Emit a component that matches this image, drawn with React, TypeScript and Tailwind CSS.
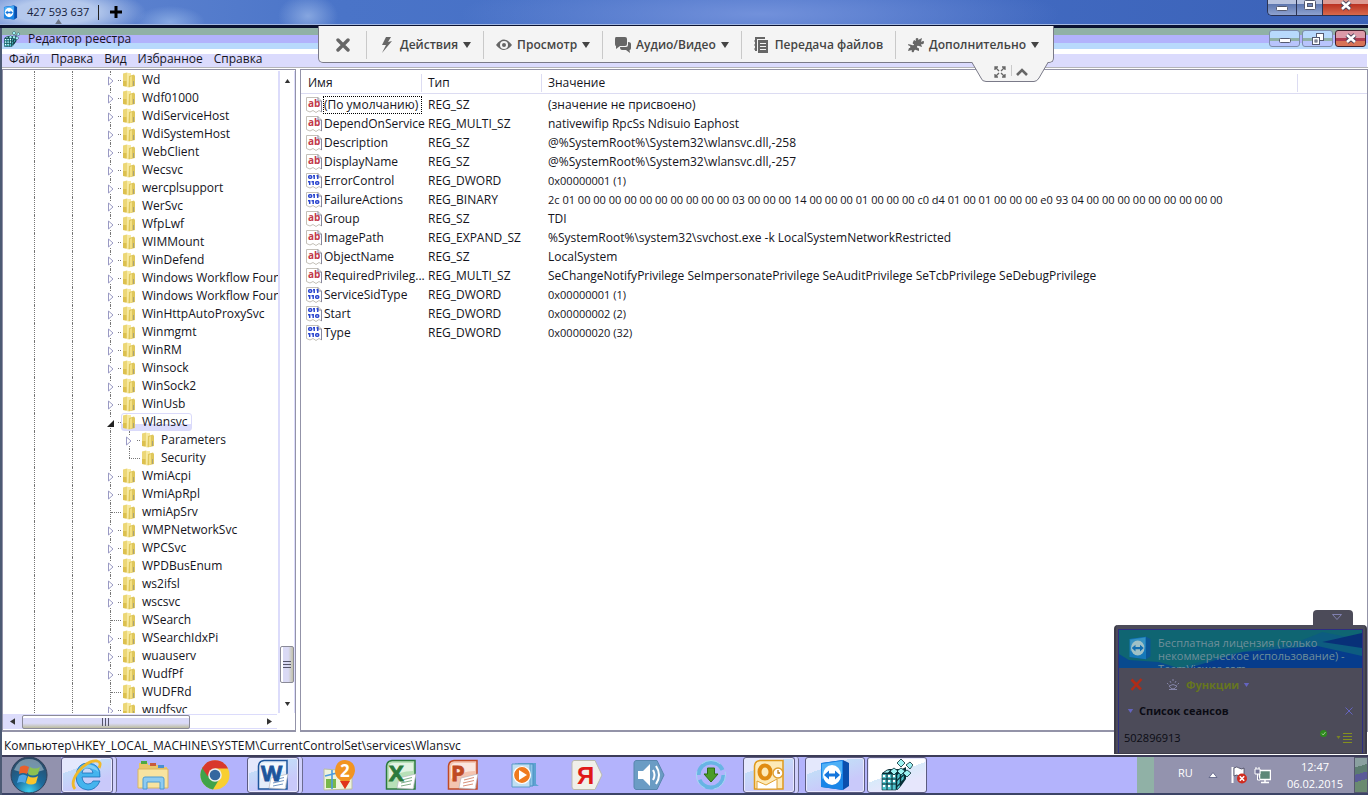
import type { ReactNode } from 'react';
import clsx from 'clsx';

type TreeNode = {
    name: string;
    leaf?: boolean;
    open?: boolean;
    child?: boolean;
    lastChild?: boolean;
};

const nodes: TreeNode[] = [
    { name: 'Wd' },
    { name: 'Wdf01000' },
    { name: 'WdiServiceHost' },
    { name: 'WdiSystemHost' },
    { name: 'WebClient' },
    { name: 'Wecsvc' },
    { name: 'wercplsupport' },
    { name: 'WerSvc' },
    { name: 'WfpLwf' },
    { name: 'WIMMount' },
    { name: 'WinDefend' },
    { name: 'Windows Workflow Foundation 3.0.0.0' },
    { name: 'Windows Workflow Foundation 4.0.0.0' },
    { name: 'WinHttpAutoProxySvc' },
    { name: 'Winmgmt' },
    { name: 'WinRM' },
    { name: 'Winsock' },
    { name: 'WinSock2' },
    { name: 'WinUsb' },
    { name: 'Wlansvc', open: true },
    { name: 'Parameters', child: true },
    { name: 'Security', child: true, leaf: true, lastChild: true },
    { name: 'WmiAcpi' },
    { name: 'WmiApRpl' },
    { name: 'wmiApSrv', leaf: true },
    { name: 'WMPNetworkSvc' },
    { name: 'WPCSvc' },
    { name: 'WPDBusEnum' },
    { name: 'ws2ifsl' },
    { name: 'wscsvc' },
    { name: 'WSearch', leaf: true },
    { name: 'WSearchIdxPi' },
    { name: 'wuauserv' },
    { name: 'WudfPf' },
    { name: 'WUDFRd', leaf: true },
    { name: 'wudfsvc' },
];

const values = [
    ['(По умолчанию)', 'REG_SZ', '(значение не присвоено)'],
    ['DependOnService', 'REG_MULTI_SZ', 'nativewifip RpcSs Ndisuio Eaphost'],
    ['Description', 'REG_SZ', '@%SystemRoot%\\System32\\wlansvc.dll,-258'],
    ['DisplayName', 'REG_SZ', '@%SystemRoot%\\System32\\wlansvc.dll,-257'],
    ['ErrorControl', 'REG_DWORD', '0x00000001 (1)'],
    [
        'FailureActions',
        'REG_BINARY',
        '2c 01 00 00 00 00 00 00 00 00 00 00 03 00 00 00 14 00 00 00 01 00 00 00 c0 d4 01 00 01 00 00 00 e0 93 04 00 00 00 00 00 00 00 00 00',
    ],
    ['Group', 'REG_SZ', 'TDI'],
    [
        'ImagePath',
        'REG_EXPAND_SZ',
        '%SystemRoot%\\system32\\svchost.exe -k LocalSystemNetworkRestricted',
    ],
    ['ObjectName', 'REG_SZ', 'LocalSystem'],
    [
        'RequiredPrivileg...',
        'REG_MULTI_SZ',
        'SeChangeNotifyPrivilege SeImpersonatePrivilege SeAuditPrivilege SeTcbPrivilege SeDebugPrivilege',
    ],
    ['ServiceSidType', 'REG_DWORD', '0x00000001 (1)'],
    ['Start', 'REG_DWORD', '0x00000002 (2)'],
    ['Type', 'REG_DWORD', '0x00000020 (32)'],
];

const isBinary = (type: string) => type === 'REG_DWORD' || type === 'REG_BINARY';

const TeamViewerLogo = ({ size }: { size: number }) => (
    <svg width={size} height={size} viewBox="0 0 32 32" className="shrink-0">
        <path d="M3 4 L24 1 L30 4 V27 L24 31 L3 28 Z" fill="#0a4fae" />
        <path d="M2 4 L24 1 V31 L2 28 Z" fill="#1a86e8" />
        <path d="M3 5 L23 2 V15 Q12 14 3 20 Z" fill="#4fb0f6" />
        <ellipse cx="13" cy="16" rx="9" ry="10" fill="#fff" />
        <path
            d="M5 16 L10 11.5 V14.5 H16 V11.5 L21 16 L16 20.5 V17.5 H10 V20.5 Z"
            fill="#1576dc"
        />
    </svg>
);

const RegeditLogo = ({ size }: { size: number }) => (
    <svg width={size} height={size} viewBox="0 0 32 32" className="shrink-0">
        <path
            d="M1 14 L8 10 H21 L25 8 V20 L20 27 L15 31 H1 Z"
            fill="#062f38"
        />
        <g fill="#52c6cf" stroke="#0a2c34" strokeWidth=".6">
            <path d="M1 15h5v5H1zM6 15h5v5H6zM11 15h4v5h-4zM1 20h5v5H1zM6 20h5v5H6zM11 20h4v5h-4zM1 25h5v6H1zM6 25h5v6H6zM11 25h4v6h-4z" />
            <path d="M16 16l3-3v5l-3 3zM16 22l3-3v5l-3 3zM20 13l3-3v5l-3 3zM20 19l3-3v4l-3 3zM16 28l3-3v3l-3 3z" />
        </g>
        <g fill="#9df1f2" stroke="#0a2c34" strokeWidth=".8">
            <path d="M2 14l4-3h4l-3 3zM9 12l4-3 4 3-4 4zM16 12l4-3 4 3-4 4z" />
            <path d="M16 4l4-4 4 4-4 4zM25 6l4-3 3 3-3 4zM22 14l4-3 4 3-4 4z" />
        </g>
        <g fill="#fff">
            <path d="M2 16h2v2H2zM7 16h2v2H7zM12 16h2v2h-2zM2 21h2v2H2zM7 21h2v2H7zM12 21h2v2h-2zM2 26h2v2H2zM7 26h2v2H7z" />
        </g>
    </svg>
);

const Folder = () => (
    <svg width="14" height="16" viewBox="0 0 14 16" className="shrink-0">
        <path d="M1 1.500 L5 .5 L7 2 V15 L1 14 Z" fill="#ecd777" />
        <path d="M5 1 H9 V14 L5 15.500 Z" fill="#f7eaa2" />
        <path d="M7 4 L12 2.500 L13 4 V14 L6.500 15.500 Z" fill="#dfc75c" />
        <path d="M8 5 L10 4 V14 L8 15 Z" fill="#f3e085" />
        <path d="M1 9 H4.500 V14.500 L1 14 Z" fill="#dcc04f" />
        <path d="M11.500 9 V14" stroke="#a9a37a" />
    </svg>
);

const ValueIcon = ({ binary }: { binary: boolean }) => (
    <svg width="16" height="16" viewBox="0 0 16 16" className="shrink-0">
        <path d="M.5 .5 H12 L15.500 4 V15 L13 13.500 L10 15.500 L7 13.500 L4 15 L.5 13.500 Z" fill="#fff" stroke="#c4c0b8" />
        <path d="M12 .5 V4 H15.500 M15.500 4 V15" fill="none" stroke="#85859c" />
        {binary ? (
            <g fill="none" stroke="#2b46cf" strokeWidth="1.500">
                <rect x="2.700" y="2.700" width="3" height="2.600" rx="1" />
                <path d="M7 2.700 H9 M8.200 2 V6 M10.500 2.700 H12 M11.700 2 V6" />
                <path d="M2 8.700 H3.500 M3.700 8 V12 M5.500 8.700 H7 M7.200 8 V12" />
                <rect x="9.700" y="8.700" width="3" height="2.600" rx="1" />
            </g>
        ) : (
            <text x="2" y="10" fontSize="10" fontWeight="700" fill="#c2394a" fontFamily="Open Sans, sans-serif">
                ab
            </text>
        )}
    </svg>
);

const Expander = ({ open }: { open?: boolean }) => (
    <svg width="8" height="10" viewBox="0 0 8 10" className="absolute -left-1 top-[5px] bg-white">
        {open ? (
            <path d="M7 2 V9 H0 Z" fill="#222" />
        ) : (
            <path d="M1.500 1 L6 5 L1.500 9 Z" fill="#fff" stroke="#9a9ac4" />
        )}
    </svg>
);

const TreeRow = ({ name, leaf, open, child, lastChild }: TreeNode) => (
    <li className="flex h-[18px] shrink-0">
        <span className="w-[32px] shrink-0 border-r border-dotted border-[#777]" />
        <span className="w-[38px] shrink-0 border-r border-dotted border-[#777]" />
        <span className="w-[37px] shrink-0" />
        <span
            className={clsx('relative shrink-0 border-l border-dotted border-[#777]', child ? 'w-[19px]' : 'w-[11px]')}
        >
            {!child && !leaf && <Expander open={open} />}
            {!child && (
                <span
                    className={clsx(
                        'absolute right-0 top-[9px] border-t border-dotted border-[#777]',
                        leaf ? 'w-full' : 'w-[3px]',
                    )}
                />
            )}
        </span>
        {child && (
            <span className="relative w-[11px] shrink-0">
                <span
                    className={clsx(
                        'absolute left-0 top-0 border-l border-dotted border-[#777]',
                        lastChild ? 'h-[9px]' : 'h-full',
                    )}
                />
                {!leaf && <Expander />}
                <span
                    className={clsx(
                        'absolute right-0 top-[9px] border-t border-dotted border-[#777]',
                        leaf ? 'w-full' : 'w-[3px]',
                    )}
                />
            </span>
        )}
        <button
            type="button"
            className={clsx(
                'flex items-center gap-[6px] whitespace-nowrap rounded-[3px] border pr-[3px]',
                open
                    ? 'border-[#dadafa] bg-[linear-gradient(#fff_60%,#dcdcfc_60%)]'
                    : 'border-transparent',
            )}
        >
            <Folder />
            {name}
        </button>
    </li>
);

const Caret = ({ className }: { className?: string }) => (
    <svg width="8" height="6" viewBox="0 0 8 6" className={clsx('shrink-0', className)}>
        <path d="M0 0 H8 L4 6 Z" fill="currentColor" />
    </svg>
);

const Grip = ({ vertical }: { vertical?: boolean }) => (
    <svg width="8" height="8" viewBox="0 0 8 8">
        <path
            d={vertical ? 'M0 .5H8M0 3.500H8M0 6.500H8' : 'M.5 0V8M3.500 0V8M6.500 0V8'}
            stroke="#55556a"
        />
    </svg>
);

const TreePane = () => (
    <nav className="flex w-[294px] shrink-0 flex-col border border-b-2 border-[#9393a8] bg-white pt-px">
        <div className="flex min-h-0 flex-1">
            <ul className="flex min-w-0 flex-1 flex-col overflow-hidden">
                {nodes.map((node) => (
                    <TreeRow key={node.name} {...node} />
                ))}
            </ul>
            <div className="flex w-4 flex-col items-center border-l-2 border-[#dcdcfb]">
                <button type="button" aria-label="Вверх" className="flex h-5 items-center">
                    <Caret className="h-[4px] w-[7px] rotate-180 text-[#333]" />
                </button>
                <div className="flex-1" />
                <div className="flex h-[37px] w-[14px] items-center justify-center rounded-[2px] border border-[#8a8a98] bg-[linear-gradient(90deg,#fff_15%,#dadaf5_20%,#dadaf5_60%,#c2c2aa)]">
                    <Grip vertical />
                </div>
                <button type="button" aria-label="Вниз" className="mb-px mt-[13px] flex h-4 items-center">
                    <Caret className="h-[4px] w-[7px] text-[#333]" />
                </button>
            </div>
            <div className="w-px bg-[#dcdcfb]" />
        </div>
        <div className="mt-px flex h-[15px] items-center bg-[#dcdcfb]">
            <button type="button" aria-label="Влево" className="flex w-[19px] justify-center">
                <Caret className="h-[5px] w-[7px] rotate-90 text-[#333]" />
            </button>
            <div className="flex h-[14px] w-[168px] items-center justify-center rounded-[2px] border border-[#8a8a98] bg-[linear-gradient(#fff_15%,#dadaf8_20%,#dadaf8_60%,#bcbca0)]">
                <Grip />
            </div>
            <div className="my-px h-[13px] flex-1 bg-white" />
            <button type="button" aria-label="Вправо" className="flex h-[13px] w-4 items-center justify-center bg-white">
                <Caret className="h-[5px] w-[7px] -rotate-90 text-[#333]" />
            </button>
            <div className="h-full w-[18px] bg-white" />
        </div>
        <div className="h-px" />
    </nav>
);

const ValuesPane = () => (
    <section className="min-w-0 flex-1 overflow-hidden border border-b-2 border-[#9393a8] bg-white">
        <table className="w-full table-fixed border-collapse text-left">
            <colgroup>
                <col className="w-[121px]" />
                <col className="w-[120px]" />
                <col />
                <col className="w-[69px]" />
            </colgroup>
            <thead>
                <tr className="h-[23px] border-b border-[#dcdcf2]">
                    {['Имя', 'Тип', 'Значение'].map((title, i) => (
                        <th key={title} className="p-0 pt-1 font-normal">
                            <span
                                className={clsx(
                                    'flex h-[18px] items-center border-r border-[#dcdcf2]',
                                    i === 0 ? 'pl-[7px]' : 'pl-[6px]',
                                )}
                            >
                                {title}
                            </span>
                        </th>
                    ))}
                    <th />
                </tr>
            </thead>
            <tbody className="before:block before:h-[2px] before:content-['']">
                {values.map(([name, type, value], i) => (
                    <tr key={name} className="h-[19px]">
                        <td className="p-0 pl-[5px]">
                            <span className="flex h-[19px] items-center gap-px whitespace-nowrap">
                                <ValueIcon binary={isBinary(type)} />
                                <span
                                    className={clsx(
                                        'border border-dotted',
                                        i === 0 ? 'w-full border-black' : 'border-transparent',
                                    )}
                                >
                                    {name}
                                </span>
                            </span>
                        </td>
                        <td className="p-0 pl-[6px]">{type}</td>
                        <td
                            colSpan={2}
                            className={clsx('whitespace-nowrap p-0 pl-[6px]', isBinary(type) && 'text-[11px]')}
                        >
                            {value}
                        </td>
                    </tr>
                ))}
            </tbody>
        </table>
    </section>
);

const ToolbarItem = ({ icon, label, menu = true }: { icon: ReactNode; label: string; menu?: boolean }) => (
    <button type="button" className="flex h-7 shrink-0 items-center gap-[5px] border-l border-[#c9c9c9] px-3">
        {icon}
        {label}
        {menu && <Caret />}
    </button>
);

const SessionToolbar = () => (
    <div className="absolute left-[318px] top-[26px] z-10 text-[#444]">
        <div className="flex h-[37px] w-[736px] items-center whitespace-nowrap rounded-b-[5px] border border-t-0 border-[#7a7a88] bg-[#f4f4f4] pl-px pt-px text-[12px] font-semibold">
            <button type="button" aria-label="Закрыть" className="flex w-[46px] shrink-0 justify-center">
                <svg width="14" height="14" viewBox="0 0 14 14">
                    <path d="M2 2 L12 12 M12 2 L2 12" stroke="#666" strokeWidth="3.400" strokeLinecap="round" />
                </svg>
            </button>
            <ToolbarItem
                label="Действия"
                icon={
                    <svg width="16" height="16" viewBox="0 0 16 16">
                        <path d="M7 0 H12 L9 5 L13 4 L3 16 L7 8 H3 Z" fill="#666" />
                    </svg>
                }
            />
            <ToolbarItem
                label="Просмотр"
                icon={
                    <svg width="16" height="16" viewBox="0 0 16 16">
                        <path d="M0 8 Q8 -3 16 8 Q8 18 0 8 Z" fill="#666" />
                        <circle cx="8" cy="8" r="4" fill="#f4f4f4" />
                        <circle cx="8" cy="8" r="2" fill="#666" />
                    </svg>
                }
            />
            <ToolbarItem
                label="Аудио/Видео"
                icon={
                    <svg width="16" height="16" viewBox="0 0 16 16">
                        <path d="M1 0 H10 Q12 0 12 2 V7 Q12 9 10 9 H5 L1 12 V9 Q0 9 0 7 V2 Q0 0 1 0 Z" fill="#666" />
                        <path d="M13 5 Q16 5 16 7 V11 Q16 13 14.500 13 L15 16 L11 13 H7 Q5 13 5 10 H11 Q13 10 13 8 Z" fill="#666" />
                    </svg>
                }
            />
            <ToolbarItem
                label="Передача файлов"
                menu={false}
                icon={
                    <svg width="16" height="16" viewBox="0 0 16 16">
                        <path d="M11 1 H2 V14" fill="none" stroke="#666" strokeWidth="2" />
                        <path d="M0 4 H3 M0 8 H3 M0 12 H3" stroke="#666" />
                        <path d="M4 3 H14 V16 H4 Z" fill="#666" />
                        <path d="M6 6.500 H12 M6 9.500 H12 M6 12.500 H12" stroke="#f4f4f4" />
                    </svg>
                }
            />
            <ToolbarItem
                label="Дополнительно"
                icon={
                    <svg width="16" height="16" viewBox="0 0 16 16">
                        <path
                            d="M6 3 L8 4 Q7 1 9 1 Q11 1 10 3 L14 1 L13 5 Q16 3 16 5 Q16 8 13 7 L14 10 L11 9 Q9 8 9 10 Q10 12 11 11 L11 14 L8 13 Q7 12 6 14 Q6 16 4 15 Q3 14 4 13 L0 14 L1 11 Q3 11 2 9 Q0 9 0 7 L4 8 Q6 9 6 7 Q4 7 5 5 Z"
                            fill="#666"
                        />
                    </svg>
                }
            />
        </div>
        <div className="absolute left-[654px] top-9">
            <svg width="78" height="21" viewBox="0 0 78 21">
                <path d="M0 0 L9 16 Q10 19.500 14 19.500 H62 Q65 19.500 67 16 L76 0 Z" fill="#f4f4f4" />
                <path d="M0 .5 L9 16 Q10 19.500 14 19.500 H62 Q65 19.500 67 16 L76 .5" fill="none" stroke="#7a7a88" />
                <path d="M39.500 3 V14" stroke="#c9c9c9" />
                <path
                    d="M23 8 V5 H26 M23 5 L27 9 M33 8 V5 H30 M33 5 L29 9 M23 12 V15 H26 M23 15 L27 11 M33 12 V15 H30 M33 15 L29 11"
                    fill="none"
                    stroke="#666"
                    strokeWidth="1.300"
                />
                <path d="M45 13 L50 8 L55 13" fill="none" stroke="#666" strokeWidth="2.600" />
            </svg>
        </div>
    </div>
);

const MinGlyph = () => (
    <svg width="12" height="6" viewBox="0 0 12 6">
        <rect x=".5" y="1.500" width="11" height="4" rx="1" fill="#fff" stroke="#555a70" />
    </svg>
);

const CloseGlyph = () => (
    <svg width="12" height="11" viewBox="0 0 12 11">
        <path d="M2 2 L10 9 M10 2 L2 9" stroke="#4a4058" strokeWidth="4.400" />
        <path d="M2 2 L10 9 M10 2 L2 9" stroke="#fff" strokeWidth="2.600" />
    </svg>
);

const ViewerBar = () => (
    <header className="h-7 shrink-0 border-b-[3px] border-[#0b1230]">
        <div className="flex h-[25px] items-start justify-between border-b border-[#a3b8e2] bg-[radial-gradient(90px_26px_at_56px_12px,#b4c8ec_45%,transparent),radial-gradient(35px_16px_at_170px_22px,#86a8e2,transparent),radial-gradient(30px_22px_at_308px_16px,#86a6e0,transparent),radial-gradient(300px_40px_at_760px_14px,#7291db,transparent),linear-gradient(90deg,#6488d2,#4a74c8_25%,#446dc4_60%,#3b62b8)]">
            <div className="flex h-6 items-center text-[11px] text-[#15203a]">
                <span className="flex w-[27px] pl-[3px]">
                    <TeamViewerLogo size={15} />
                </span>
                <span className="relative w-[71px]">
                    427 593 637
                    <Caret className="absolute -bottom-1 left-[26px] h-[5px] w-[11px] rotate-180 text-[#6c7484]" />
                </span>
                <span className="h-[15px] w-px bg-[#222]" />
                <button type="button" aria-label="Новое подключение" className="ml-[11px]">
                    <svg width="12" height="12" viewBox="0 0 12 12">
                        <path d="M6 0 V12 M0 6 H12" stroke="#000" strokeWidth="3" />
                    </svg>
                </button>
            </div>
            <div className="flex h-4 overflow-hidden rounded-bl-[5px] border border-r-0 border-t-0 border-[#2a3354]">
                <button
                    type="button"
                    aria-label="Свернуть"
                    className="flex w-7 items-end justify-center bg-[linear-gradient(#b7c2de_30%,#5f78b0_30%,#8fa3d0)] pb-1"
                >
                    <MinGlyph />
                </button>
                <button
                    type="button"
                    aria-label="Развернуть"
                    className="flex w-[27px] justify-center border-x border-[#2a3354] bg-[linear-gradient(#b7c2de_30%,#5f78b0_30%,#8fa3d0)]"
                >
                    <svg width="12" height="11" viewBox="0 0 12 11">
                        <rect x=".5" y=".5" width="11" height="9" rx="1" fill="#fff" stroke="#555a70" />
                        <rect x="3.500" y="3.500" width="5" height="3" fill="#7187b8" stroke="#555a70" />
                    </svg>
                </button>
                <button
                    type="button"
                    aria-label="Закрыть"
                    className="flex w-[45px] justify-center bg-[linear-gradient(#dd9a92_30%,#bb3322_30%,#d86a4c)]"
                >
                    <CloseGlyph />
                </button>
            </div>
        </div>
    </header>
);

const TitleBar = () => (
    <div className="flex h-[21px] shrink-0 items-center justify-between bg-[linear-gradient(#90b1a6_7px,#b2b2fc_7px,#b2b2fc_15px,#b8d9fc_15px)] pl-[2px]">
        <div className="flex items-center gap-2">
            <RegeditLogo size={16} />
            <h1>Редактор реестра</h1>
        </div>
        <div className="flex gap-[2px] pr-[2px]">
            <button
                type="button"
                aria-label="Свернуть"
                className="flex h-[17px] w-[31px] items-end justify-center rounded-[3px] border border-[#7d8cab] bg-[linear-gradient(#b8d9fc_45%,#90b1a6_45%,#90b1a6_68%,#b8c4fc_68%)] pb-[3px]"
            >
                <MinGlyph />
            </button>
            <button
                type="button"
                aria-label="Восстановить"
                className="flex h-[17px] w-[31px] items-center justify-center rounded-[3px] border border-[#7d8cab] bg-[linear-gradient(#b8d9fc_45%,#90b1a6_45%,#90b1a6_68%,#b8c4fc_68%)]"
            >
                <svg width="12" height="12" viewBox="0 0 12 12">
                    <g fill="#fff" stroke="#555a70">
                        <rect x="4.500" y=".5" width="7" height="7" />
                        <rect x=".5" y="4.500" width="7" height="7" />
                        <rect x="3" y="7" width="2" height="2" />
                    </g>
                </svg>
            </button>
            <button
                type="button"
                aria-label="Закрыть"
                className="flex h-[17px] w-[31px] items-center justify-center rounded-[3px] border border-[#42212e] bg-[linear-gradient(#dc9aa8_45%,#b03c50_45%,#b03c50_68%,#d87358_68%)]"
            >
                <CloseGlyph />
            </button>
        </div>
    </div>
);

const SessionPanel = () => (
    <aside className="absolute bottom-[41px] right-px z-10 flex w-[253px] flex-col items-end text-[11px] text-[#0b0b14]">
        <button
            type="button"
            aria-label="Свернуть панель"
            className="mr-[14px] flex h-[15px] w-10 items-center justify-center rounded-t-[4px] bg-[#4c4b59] pl-2"
        >
            <svg width="10" height="7" viewBox="0 0 10 7">
                <path d="M.5 .5 H9.500 L5 5.500 Z" fill="none" stroke="#8080b0" />
            </svg>
        </button>
        <div className="h-[129px] w-full rounded-t-[4px] border-x-2 border-b border-[#3d3c49] bg-[#4c4b59] px-[2px] pt-1">
            <div className="h-full border-x border-t border-[#2e2e80]">
                <div className="relative flex h-[38px] overflow-hidden bg-[#0d5c80] pt-[6px]">
                    <svg
                        className="absolute inset-0 h-full w-full"
                        viewBox="0 0 245 38"
                        preserveAspectRatio="none"
                    >
                        <path d="M0 0 H245 V10 L205 2 L180 12 L110 24 L60 38 L0 30 Z" fill="#0f6572" />
                        <path d="M0 24 L10 30 L40 32 L60 38 H0 Z" fill="#084a8e" />
                        <path d="M70 38 L125 22 L200 16 L245 26 V38 Z" fill="#063c8c" />
                        <path d="M205 12 L245 3 V18 Z" fill="#083078" />
                    </svg>
                    <span className="relative w-[39px] shrink-0 pl-[9px]">
                        <span className="block opacity-60">
                            <TeamViewerLogo size={24} />
                        </span>
                    </span>
                    <p className="relative leading-[13px] text-[#6f8f9a]">
                        Бесплатная лицензия (только некоммерческое использование) - TeamViewer.com
                    </p>
                </div>
                <div className="flex h-[33px] items-center pl-[11px] font-bold text-[#66761f]">
                    <svg width="13" height="13" viewBox="0 0 13 13">
                        <path d="M1.500 1.500 L11 11.500 M11.500 1 L1.500 12" stroke="#b02c18" strokeWidth="2.600" />
                    </svg>
                    <svg width="14" height="13" viewBox="0 0 14 13" className="ml-[23px] mr-[6px]">
                        <g fill="none" stroke="#8585a8">
                            <path d="M1 5 L3 7 M13 5 L11 7 M4 3 L5 5 M10 3 L9 5 M7 1 V4" strokeDasharray="2 1" />
                            <path d="M3 11.500 H11 M3 8 Q7 5 11 8 Q7 14 3 8" />
                        </g>
                    </svg>
                    Функции
                    <Caret className="ml-1 h-1 w-[7px] text-[#6464c0]" />
                </div>
                <div className="flex h-5 items-center pl-[8px] pr-[9px] font-bold">
                    <Caret className="mr-[5px] h-1 w-[7px] text-[#6464c0]" />
                    Список сеансов
                    <button type="button" aria-label="Скрыть" className="ml-auto">
                        <svg width="8" height="8" viewBox="0 0 8 8">
                            <path d="M.5 .5 L7.500 7.500 M7.500 .5 L.5 7.500" stroke="#6464c0" />
                        </svg>
                    </button>
                </div>
                <div className="flex h-[33px] items-center pl-[5px] pr-[10px]">
                    502896913
                    <svg width="9" height="9" viewBox="0 0 9 9" className="mb-2 ml-auto mr-2">
                        <circle cx="4.500" cy="4.500" r="3.500" fill="#2d8a1e" />
                        <path d="M3 4.500 L4.200 6 L6.500 3" fill="none" stroke="#9cc58f" />
                    </svg>
                    <Caret className="mr-[2px] h-[3px] w-[5px] text-[#7a8424]" />
                    <svg width="9" height="10" viewBox="0 0 9 10">
                        <path d="M0 .5 H9 M0 3.500 H9 M0 6.500 H9 M0 9.500 H9" stroke="#84901e" />
                    </svg>
                </div>
            </div>
        </div>
    </aside>
);

const OrbIcon = () => (
    <svg width="38" height="38" viewBox="0 0 38 38">
        <defs>
            <radialGradient id="orb" cx=".5" cy=".95" r=".9">
                <stop offset="0" stopColor="#3fd0ee" />
                <stop offset=".45" stopColor="#1c6a9c" />
                <stop offset="1" stopColor="#2a4a66" />
            </radialGradient>
        </defs>
        <circle cx="19" cy="19" r="18" fill="url(#orb)" stroke="#30405a" />
        <path d="M4 14 Q8 3 19 3 Q30 3 34 14 Q19 20 4 14Z" fill="#b4c8d6" opacity=".55" />
        <path d="M10 11 Q14 8 19 11 L17 18 Q13 16 9 18 Z" fill="#e8602c" />
        <path d="M20 11 Q25 14 30 11 L28 18 Q23 21 18 18 Z" fill="#8cc152" />
        <path d="M9 20 Q13 17 17 20 L15 27 Q11 25 7 27 Z" fill="#4fa6e6" />
        <path d="M18 20 Q23 23 28 20 L26 27 Q21 30 16 27 Z" fill="#fbc52d" />
    </svg>
);

const IeIcon = () => (
    <svg width="34" height="32" viewBox="0 0 34 32">
        <path
            d="M30 18 H12 Q13 25 18 25 Q22 25 23 22 H30 Q26 31 18 31 Q6 30 6 17 Q7 4 18 4 Q31 5 30 18 Z M12 14 H23 Q22 9 17 9 Q13 9 12 14 Z"
            fill="#45b4ee"
            stroke="#1c6fb8"
            strokeWidth=".8"
            fillRule="evenodd"
        />
        <path d="M8 14 Q10 6 18 5.500 Q27 6 28.500 13 Q18 5 8 14 Z" fill="#a8e0fa" opacity=".6" />
        <path d="M5 30 Q0 24 8 13 Q18 1 27 2 Q32 3 29 9" fill="none" stroke="#f0b92a" strokeWidth="2.800" />
    </svg>
);

const ExplorerIcon = () => (
    <svg width="34" height="30" viewBox="0 0 34 30">
        <path d="M3 3 H12 V5 H24 V7 H31 V27 H3 Z" fill="#e9c66a" />
        <path d="M5 1 h6 v3 h-6z" fill="#4da944" />
        <path d="M14 3 h6 v3 h-6z" fill="#c85a3c" />
        <path d="M22 5 h6 v3 h-6z" fill="#4a8fd0" />
        <path d="M2 9 H32 V28 H2 Z" fill="#f8e3a0" stroke="#d9b560" />
        <path d="M7 29 V19 Q7 17 9 17 H26 Q28 17 28 19 V29 H24 V22 H11 V29 Z" fill="#8ecbf0" stroke="#4d9bd4" />
    </svg>
);

const ChromeIcon = () => (
    <svg width="30" height="30" viewBox="0 0 30 30">
        <circle cx="15" cy="15" r="14.500" fill="#f8cf31" />
        <path d="M15 15 L2.500 7.500 A14.500 14.500 0 0 0 13 29.400 L20 18 Z" fill="#3fa34a" />
        <path d="M15 15 L7.500 16 L2.200 8 A14.500 14.500 0 0 1 28 8.500 H15 Z" fill="#d8382c" />
        <circle cx="15" cy="15" r="6.800" fill="#eee" />
        <circle cx="15" cy="15" r="5.300" fill="#35679f" />
    </svg>
);

type OfficeProps = { letter: string; color: string; tint: string };

const OfficeIcon = ({ letter, color, tint }: OfficeProps) => (
    <svg width="32" height="32" viewBox="0 0 32 32">
        <path d="M7 1.500 H30 V30 H1.500 V7 Q2 2 7 1.500 Z" fill={tint} stroke={color} strokeWidth="1.500" />
        <path d="M4 7 Q5 4 8 4 H28 V12 Q14 12 4 20 Z" fill="#fff" opacity=".6" />
        <path d="M14 19 L31 15 L28 30 L12 29 Z" fill="#fff" stroke="#b8b8c0" strokeWidth=".7" />
        <path d="M17 21 L27 18.500 M16 24 L27 21.500 M16 27 L26 25" stroke={color} opacity=".6" />
        <text
            x="4"
            y="22"
            fontSize="22"
            fontWeight="700"
            fill={color}
            stroke={color}
            strokeWidth=".8"
            fontFamily="Open Sans, sans-serif"
        >
            {letter}
        </text>
    </svg>
);

const MapIcon = () => (
    <svg width="34" height="32" viewBox="0 0 34 32">
        <path d="M2 10 L30 12 V30 L2 31 Z" fill="#eef3dc" stroke="#b9bfa0" />
        <path d="M4 20 H14 V29 H4 Z" fill="#79b84a" />
        <path d="M3 17 L15 14 M10 11 V30" stroke="#4c9be0" strokeWidth="1.600" />
        <path d="M13 12 Q14 1 23 1 Q33 2 33 12 Q32 18 28 21 L23 30 L18 21 Q13 18 13 12 Z" fill="#f29422" />
        <path d="M18 22 H28 L23 30 Z" fill="#e0341c" />
        <text x="18" y="18" fontSize="17" fontWeight="700" fill="#fff" fontFamily="Open Sans, sans-serif">
            2
        </text>
    </svg>
);

const PlayerIcon = () => (
    <svg width="30" height="28" viewBox="0 0 30 28">
        <path d="M8 2 H26 V23 L29 25 H9 Z" fill="#5ea3d2" />
        <path d="M5 3 H23 V25 H5 Z" fill="#8cc4e8" stroke="#4a8fc0" />
        <path d="M2 3 H20 V26 H2 Z" fill="#c0dff2" stroke="#5c9cc8" />
        <circle cx="12" cy="14" r="8.500" fill="#ef7a1e" stroke="#fff" strokeWidth="1.200" />
        <path d="M9 9 L17 14 L9 19 Z" fill="#fff" />
    </svg>
);

const TagIcon = ({ children, fill, stroke }: { children: ReactNode; fill: string; stroke: string }) => (
    <svg width="32" height="32" viewBox="0 0 32 32">
        <path d="M3 1.500 H24 L31 16 L24 30.500 H3 Q1 30 1 28 V4 Q1 2 3 1.500 Z" fill={fill} stroke={stroke} />
        {children}
    </svg>
);

const UpdateIcon = () => (
    <svg width="32" height="32" viewBox="0 0 32 32">
        <circle cx="16" cy="16" r="12.500" fill="none" stroke="#68b4e4" strokeWidth="4" strokeDasharray="34 5" />
        <circle cx="16" cy="16" r="14.500" fill="none" stroke="#a8d8f4" strokeDasharray="20 9" />
        <path d="M12.500 9 H19.500 V15 H23 L16 23 L9 15 H12.500 Z" fill="#4c9c28" stroke="#2c6c14" />
    </svg>
);

const OutlookIcon = () => (
    <svg width="32" height="32" viewBox="0 0 32 32">
        <path d="M7 1.500 H30 V30 H1.500 V7 Q2 2 7 1.500 Z" fill="#fdeab8" stroke="#e09a1c" strokeWidth="1.500" />
        <ellipse cx="12" cy="13" rx="5.500" ry="6.500" fill="none" stroke="#e08c12" strokeWidth="4" />
        <path d="M4 30 V22 L13 26 L24 20 V30 Z" fill="#fff" stroke="#e0a030" />
        <circle cx="25" cy="14" r="5" fill="#fff" stroke="#e0a030" strokeWidth="1.500" />
        <path d="M25 11 V14 H27" fill="none" stroke="#b87a18" strokeWidth="1.300" />
    </svg>
);

const apps: { label: string; icon: ReactNode; frame?: boolean; stacked?: boolean; active?: boolean }[] = [
    { label: 'Internet Explorer', icon: <IeIcon />, frame: true, stacked: true },
    { label: 'Проводник', icon: <ExplorerIcon /> },
    { label: 'Chrome', icon: <ChromeIcon /> },
    {
        label: 'Word',
        icon: <OfficeIcon letter="W" color="#1d559c" tint="#e4eefa" />,
        frame: true,
        stacked: true,
    },
    { label: '2ГИС', icon: <MapIcon /> },
    { label: 'Excel', icon: <OfficeIcon letter="X" color="#2c7a3c" tint="#b8e0b8" /> },
    { label: 'PowerPoint', icon: <OfficeIcon letter="P" color="#c04a24" tint="#f4c4b0" /> },
    { label: 'Проигрыватель', icon: <PlayerIcon /> },
    {
        label: 'Яндекс',
        icon: (
            <TagIcon fill="#f0efe9" stroke="#b9b9ae">
                <text x="6" y="25" fontSize="24" fontWeight="700" fill="#e01818" fontFamily="Liberation Sans, sans-serif">
                    Я
                </text>
            </TagIcon>
        ),
    },
    {
        label: 'Громкость',
        icon: (
            <TagIcon fill="#6b9cc4" stroke="#5885ae">
                <path d="M5 12 H10 L17 5 V27 L10 20 H5 Z" fill="#fff" />
                <path d="M20 11 Q23 16 20 21 M23 7 Q29 16 23 25" fill="none" stroke="#fff" strokeWidth="2" />
            </TagIcon>
        ),
    },
    { label: 'Обновление', icon: <UpdateIcon /> },
    { label: 'Outlook', icon: <OutlookIcon />, frame: true, stacked: true },
    { label: 'TeamViewer', icon: <TeamViewerLogo size={32} />, frame: true },
    { label: 'Редактор реестра', icon: <RegeditLogo size={32} />, frame: true, active: true },
];

const Taskbar = () => (
    <footer className="flex h-10 shrink-0 border-y-2 border-t-[#3c3c58] border-b-[#3c4466] bg-[#b3b3fc]">
        <button
            type="button"
            aria-label="Пуск"
            className="flex w-[59px] shrink-0 items-center justify-center bg-[#9292ae] pr-[6px]"
        >
            <OrbIcon />
        </button>
        {apps.map(({ label, icon, frame, stacked, active }) => (
            <div key={label} className="flex w-[62px] shrink-0">
                <button
                    type="button"
                    aria-label={label}
                    className={clsx(
                        'flex items-center justify-center border',
                        stacked ? 'w-[52px]' : 'w-[60px]',
                        frame
                            ? 'rounded-[3px] border-[#5c5c80] shadow-[inset_0_0_0_1px_#e8e8ff]'
                            : 'border-transparent',
                        frame && !active && 'bg-[linear-gradient(160deg,#e4e8fc_30%,#c3dcf8_30%,#c9c9fa_70%)]',
                        active && 'bg-[linear-gradient(160deg,#fff_45%,#d8eafa_45%,#e6e6fc_70%)]',
                    )}
                >
                    {icon}
                </button>
                {stacked && <span className="w-1 rounded-r-[3px] border-r border-[#6c6c90] bg-[#d0d0fc]" />}
            </div>
        ))}
        <div className="ml-auto flex items-center border-l-[17px] border-[#90b1a6] bg-[#9393ae] pl-6 pr-2 text-white">
            <span className="w-[30px] pb-1 text-[11px]">RU</span>
            <svg width="10" height="6" viewBox="0 0 10 6" className="shrink-0">
                <path d="M5 .5 L9 5.500 H1 Z" fill="#fff" stroke="#555a80" strokeWidth=".8" />
            </svg>
            <svg width="18" height="18" viewBox="0 0 18 18" className="ml-3 shrink-0">
                <path d="M2.500 1 V17" stroke="#fff" strokeWidth="2" />
                <path d="M4 2 Q7 0 9 2 Q12 4 14 2 V10 Q11 12 9 10 Q7 8 4 10 Z" fill="#fff" stroke="#44445c" strokeWidth=".8" />
                <circle cx="12" cy="12.500" r="5" fill="#d02c20" />
                <path d="M9.800 10.300 L14.200 14.700 M14.200 10.300 L9.800 14.700" stroke="#fff" strokeWidth="1.600" />
            </svg>
            <svg width="17" height="17" viewBox="0 0 17 17" className="ml-[6px] shrink-0">
                <rect x="5.500" y="3.500" width="11" height="9" fill="#5e8878" stroke="#fff" strokeWidth="1.500" />
                <path d="M7 15.500 H15 M11 13 V15" stroke="#fff" strokeWidth="1.500" />
                <path d="M1 2 H6 V7 H1 Z M3.500 7 V13 H6 M2 0 V2 M5 0 V2" fill="#77779a" stroke="#fff" />
            </svg>
            <div className="ml-[13px] w-[62px] text-center text-[11px] leading-[17px]">
                12:47
                <br />
                06.02.2015
            </div>
        </div>
        <button
            type="button"
            aria-label="Свернуть все окна"
            className="w-[14px] shrink-0 border border-[#55586e] bg-[linear-gradient(165deg,#8aa0a0_25%,#5c7c70_25%,#5c7c70_45%,#5a5a98_45%,#5a5a98_65%,#6a8a70_65%)]"
        />
    </footer>
);

export default function App() {
    return (
        <div className="relative flex h-screen flex-col overflow-hidden bg-white font-['Open_Sans','Noto_Sans',sans-serif] text-[12px] leading-4 text-[#14141c]">
            <ViewerBar />
            <SessionToolbar />
            <div className="flex min-h-0 flex-1 flex-col border-l-2 border-[#4c5a74]">
                <TitleBar />
                <nav className="mr-px flex h-[18px] shrink-0 items-center gap-[11px] bg-[linear-gradient(#fff_5px,#dbdbfd_5px)] pl-[7px] pt-[2px]">
                    {['Файл', 'Правка', 'Вид', 'Избранное', 'Справка'].map((item) => (
                        <button type="button" key={item}>
                            {item}
                        </button>
                    ))}
                </nav>
                <div className="h-[2px] shrink-0 border-t border-[#b4b4b8]" />
                <main className="flex min-h-0 flex-1 gap-1">
                    <TreePane />
                    <ValuesPane />
                </main>
                <div className="flex h-[23px] shrink-0 items-center pl-[2px] pt-1">
                    Компьютер\HKEY_LOCAL_MACHINE\SYSTEM\CurrentControlSet\services\Wlansvc
                </div>
                <Taskbar />
            </div>
            <SessionPanel />
        </div>
    );
}
